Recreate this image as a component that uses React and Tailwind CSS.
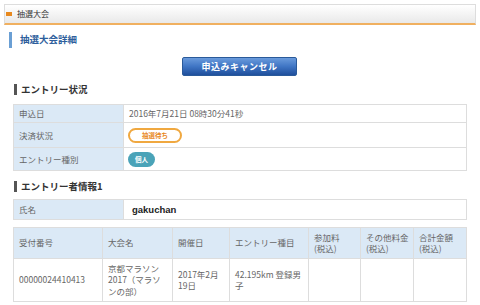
import React from "react";

const font = { fontFamily: '"Noto Sans CJK JP", "Liberation Sans", sans-serif' };

function SectionTitle({ children, className = "" }) {
  return (
    <div className={`flex items-center ml-[14px] ${className}`}>
      <span className="w-[3px] h-[11px] bg-[#555]" />
      <span className="ml-[4px] text-[9.5px] font-bold text-[#333] leading-none">{children}</span>
    </div>
  );
}

export default function App() {
  const cols = [
    { w: 89, label: ["受付番号"] },
    { w: 70, label: ["大会名"] },
    { w: 57, label: ["開催日"] },
    { w: 79, label: ["エントリー種目"] },
    { w: 52, label: ["参加料", "(税込)"] },
    { w: 53, label: ["その他料金", "(税込)"] },
    { w: 53, label: ["合計金額", "(税込)"] },
  ];

  return (
    <div className="w-[480px] h-[305px] overflow-hidden bg-white" style={font}>
      {/* ページ見出し */}
      <div className="mx-[4px] mt-[4px] h-[21px] flex items-center border border-[#ddd] border-b-2 border-b-[#f0b060] bg-gradient-to-b from-white to-[#e9e9e9]">
        <span className="ml-[1px] w-[6px] h-[4px] bg-[#e8891e]" />
        <span className="ml-[5px] text-[8px] text-[#333] leading-none">抽選大会</span>
      </div>

      {/* 詳細見出し */}
      <div className="flex items-center ml-[9px] mt-[7px] h-[16px]">
        <span className="w-[3px] h-[16px] bg-[#6a9fd4]" />
        <span className="ml-[8px] text-[9.5px] font-bold text-[#2e5e9c] leading-none">抽選大会詳細</span>
      </div>

      {/* キャンセル */}
      <div className="flex justify-center mt-[9px] pr-[1px]">
        <div className="w-[115px] h-[19px] flex items-center justify-center rounded-[2px] border border-[#2a5a9a] bg-gradient-to-b from-[#6a9bdc] via-[#3f75c4] to-[#1f4f9c] text-white text-[9px] font-bold leading-none tracking-[0.5px]">
          申込みキャンセル
        </div>
      </div>

      <SectionTitle className="mt-[8px]">エントリー状況</SectionTitle>

      <table className="ml-[13px] mt-[9px] w-[454px] border-collapse text-[8.5px] text-[#666] leading-none">
        <tbody>
          <tr className="h-[18px]">
            <td className="w-[110px] border border-[#ddd] bg-[#dbe9f6] pl-[5px]">申込日</td>
            <td className="border border-[#ddd] pl-[5px]">2016年7月21日 08時30分41秒</td>
          </tr>
          <tr className="h-[25px]">
            <td className="border border-[#ddd] bg-[#dbe9f6] pl-[5px]">決済状況</td>
            <td className="border border-[#ddd] pl-[4px]">
              <span className="inline-flex items-center justify-center w-[54px] h-[15px] rounded-full border-2 border-[#f0a840] text-[#e8891e] text-[6.5px] font-bold">
                抽選待ち
              </span>
            </td>
          </tr>
          <tr className="h-[23px]">
            <td className="border border-[#ddd] bg-[#dbe9f6] pl-[5px]">エントリー種別</td>
            <td className="border border-[#ddd] pl-[4px]">
              <span className="inline-flex items-center justify-center w-[27px] h-[15px] rounded-full bg-[#4aa3b8] text-white text-[6.5px] font-bold">
                個人
              </span>
            </td>
          </tr>
        </tbody>
      </table>

      <SectionTitle className="mt-[10px]">エントリー者情報1</SectionTitle>

      <table className="ml-[13px] mt-[7px] w-[454px] border-collapse text-[8.5px] text-[#666] leading-none">
        <tbody>
          <tr className="h-[20px]">
            <td className="w-[110px] border border-[#ddd] bg-[#dbe9f6] pl-[5px]">氏名</td>
            <td className="border border-[#ddd] pl-[8px] text-[9.5px] font-bold text-[#222]" style={{ fontFamily: '"Liberation Sans", sans-serif' }}>
              gakuchan
            </td>
          </tr>
        </tbody>
      </table>

      <table className="ml-[13px] mt-[7px] w-[453px] border-collapse table-fixed text-[8.5px] text-[#666] leading-[1.35]">
        <colgroup>
          {cols.map((c, i) => (
            <col key={i} style={{ width: c.w }} />
          ))}
        </colgroup>
        <tbody>
          <tr className="h-[31px]">
            {cols.map((c, i) => (
              <td key={i} className="border border-[#ddd] bg-[#dbe9f6] pl-[5px] align-middle">
                {c.label.map((l, j) => (
                  <div key={j}>{l}</div>
                ))}
              </td>
            ))}
          </tr>
          <tr className="h-[43px]">
            <td className="border border-[#ddd] pl-[5px] pr-[4px]">00000024410413</td>
            <td className="border border-[#ddd] pl-[5px] pr-[4px]">京都マラソン 2017（マラソンの部）</td>
            <td className="border border-[#ddd] pl-[5px] pr-[6px]">2017年2月19日</td>
            <td className="border border-[#ddd] pl-[5px] pr-[4px]">42.195km 登録男子</td>
            <td className="border border-[#ddd]" />
            <td className="border border-[#ddd]" />
            <td className="border border-[#ddd]" />
          </tr>
        </tbody>
      </table>
    </div>
  );
}
